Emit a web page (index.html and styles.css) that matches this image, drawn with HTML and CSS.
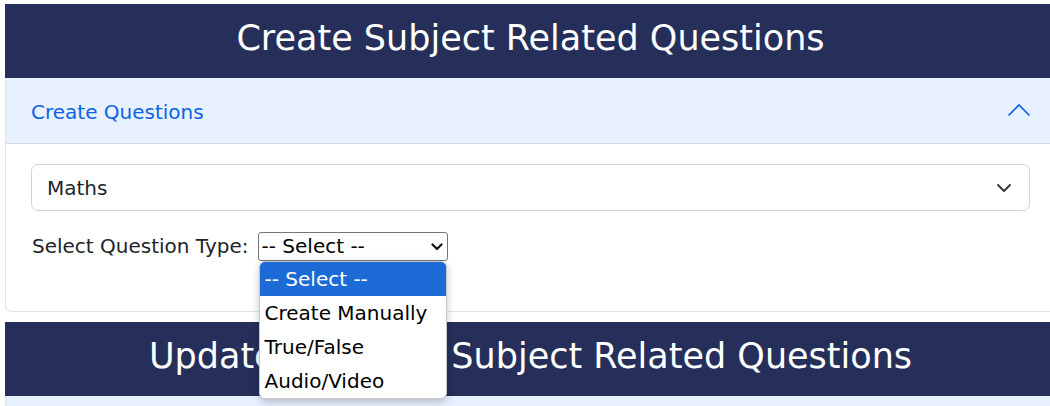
FILE: index.html
```html
<!DOCTYPE html>
<html lang="en">
<head>
<meta charset="utf-8">
<title>Create Subject Related Questions</title>
<link rel="stylesheet" href="styles.css">
</head>
<body>
<div class="page">
  <div class="banner"><h3 class="banner-title">Create Subject Related Questions</h3></div>

  <div class="accordion">
    <div class="acc-header">
      <span class="acc-title">Create Questions</span>
      <svg class="acc-chevron" width="24" height="14" viewBox="0 0 24 14" aria-hidden="true">
        <polyline points="1.5,12.5 12,2 22.5,12.5" fill="none" stroke="#0c63e4" stroke-width="1.7"/>
      </svg>
    </div>
    <div class="acc-body">
      <div class="form-select-wrap">
        <select class="form-select">
          <option>Maths</option>
        </select>
        <svg class="form-select-arrow" width="16" height="10" viewBox="0 0 16 10" aria-hidden="true">
          <polyline points="2,2 8,8 14,2" fill="none" stroke="#343a40" stroke-width="2" stroke-linecap="round" stroke-linejoin="round"/>
        </svg>
      </div>

      <div class="qtype-row">
        <label class="qtype-label" for="qtype">Select Question Type:</label>
        <div class="qtype-wrap">
          <select id="qtype" class="qtype-select">
            <option>-- Select --</option>
            <option>Create Manually</option>
            <option>True/False</option>
            <option>Audio/Video</option>
          </select>
          <svg class="qtype-arrow" width="12" height="8" viewBox="0 0 12 8" aria-hidden="true">
            <polyline points="1.5,1.5 6,6 10.5,1.5" fill="none" stroke="#111" stroke-width="2.2" stroke-linecap="round" stroke-linejoin="round"/>
          </svg>
          <ul class="qtype-popup">
            <li class="qtype-option is-active">-- Select --</li>
            <li class="qtype-option">Create Manually</li>
            <li class="qtype-option">True/False</li>
            <li class="qtype-option">Audio/Video</li>
          </ul>
        </div>
      </div>
    </div>
  </div>

  <div class="banner banner-second"><h3 class="banner-title">Update &amp; Delete Subject Related Questions</h3></div>

  <div class="accordion accordion-next">
    <div class="acc-header"></div>
  </div>
</div>
</body>
</html>
```

FILE: styles.css
```css
html, body {
  margin: 0;
  padding: 0;
}

body {
  padding: 4px 0 0 5px;
  overflow: hidden;
  background: #ffffff;
  font-family: Verdana, "DejaVu Sans", sans-serif;
  font-size: 20px;
  color: #212529;
}

.page {
  width: 1051px;
}

.banner {
  background: #252f59;
  color: #ffffff;
  text-align: center;
  padding: 13px 0 19px;
}

.banner-title {
  margin: 0;
  font-size: 35px;
  font-weight: 400;
  line-height: 42px;
}

.banner-second {
  margin-top: 10px;
}

.accordion {
  border: 1px solid #dfe2e6;
  border-top: none;
  border-radius: 0 0 7px 7px;
  background: #ffffff;
}

.acc-header {
  display: flex;
  align-items: center;
  justify-content: space-between;
  height: 65px;
  padding: 0 25px;
  background: #e7f1ff;
  border-bottom: 1px solid #d3d9e1;
  box-sizing: content-box;
}

.acc-title {
  color: #0c63e4;
  line-height: 30px;
  padding-top: 3px;
}

.acc-chevron {
  margin-right: -1px;
  margin-top: -2px;
}

.acc-body {
  padding: 20px 25px 20px;
}

.form-select-wrap {
  position: relative;
}

.form-select {
  display: block;
  width: 100%;
  height: 47px;
  box-sizing: border-box;
  margin: 0;
  padding: 0 45px 0 15px;
  font: inherit;
  line-height: 30px;
  color: #212529;
  background: #ffffff;
  border: 1px solid #ced4da;
  border-radius: 7px;
  appearance: none;
  -webkit-appearance: none;
}

.form-select-arrow {
  position: absolute;
  right: 18px;
  top: 19px;
  pointer-events: none;
}

.qtype-row {
  display: flex;
  align-items: center;
  gap: 9px;
  margin-top: 21px;
  margin-bottom: 30px;
}

.qtype-label {
  line-height: 29px;
  padding-left: 1px;
}

.qtype-wrap {
  position: relative;
}

.qtype-select {
  display: block;
  width: 190px;
  height: 29px;
  box-sizing: border-box;
  margin: 0;
  padding: 0 0 0 3px;
  font: inherit;
  line-height: 27px;
  color: #000000;
  background: #ffffff;
  border: 1px solid #767676;
  border-radius: 3px;
  appearance: none;
  -webkit-appearance: none;
}

.qtype-arrow {
  position: absolute;
  right: 5px;
  top: 11px;
  pointer-events: none;
}

.qtype-popup {
  position: absolute;
  z-index: 10;
  top: 29px;
  left: 1px;
  width: 188px;
  box-sizing: border-box;
  margin: 0;
  padding: 0;
  list-style: none;
  background: #ffffff;
  border: 1px solid #c8c8c8;
  border-radius: 6px;
  overflow: hidden;
  box-shadow: 0 3px 8px rgba(0, 0, 0, 0.22);
}

.qtype-option {
  height: 34px;
  line-height: 34px;
  padding: 0 5px;
  color: #000000;
  white-space: nowrap;
}

.qtype-option.is-active {
  background: #1b6ad6;
  color: #ffffff;
}

.accordion-next {
  border-bottom: none;
}
```
